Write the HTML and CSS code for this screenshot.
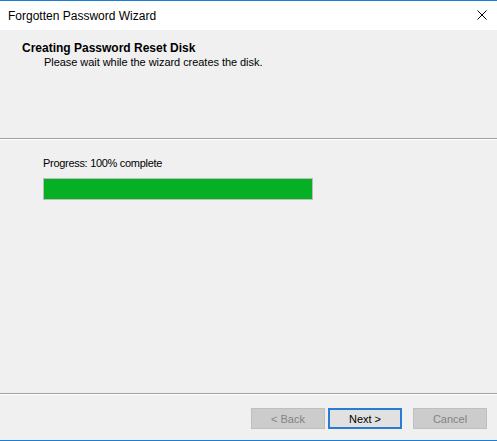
FILE: index.html
```html
<!DOCTYPE html>
<html lang="en">
<head>
    <meta charset="UTF-8">
    <title>Forgotten Password Wizard</title>
    <link rel="stylesheet" href="styles.css">
</head>
<body>
    <div class="window">
        <div class="titlebar">
            <span class="title">Forgotten Password Wizard</span>
            <svg class="close" width="10" height="10" viewBox="0 0 10 10">
                <path d="M0.5 0.5 L9.5 9.5 M9.5 0.5 L0.5 9.5" stroke="#000" stroke-width="1" fill="none"/>
            </svg>
        </div>
        <div class="header">
            <div class="heading">Creating Password Reset Disk</div>
            <div class="subheading">Please wait while the wizard creates the disk.</div>
        </div>
        <div class="separator"></div>
        <div class="content">
            <div class="progress-label">Progress: 100% complete</div>
            <div class="progress">
                <div class="progress-fill" style="width: 100%"></div>
            </div>
        </div>
        <div class="separator"></div>
        <div class="footer">
            <button class="btn btn-back" disabled>&lt; Back</button>
            <button class="btn btn-next">Next &gt;</button>
            <button class="btn btn-cancel" disabled>Cancel</button>
        </div>
    </div>
</body>
</html>
```

FILE: styles.css
```css
html, body {
    margin: 0;
    padding: 0;
}
body {
    font-family: "Liberation Sans", Arial, sans-serif;
    font-size: 11px;
    color: #000;
    background: #f0f0f0;
}
.window {
    width: 497px;
    height: 441px;
    box-sizing: border-box;
    border-top: 1px solid #1a7fd4;
    border-bottom: 1px solid #1a7fd4;
    display: flex;
    flex-direction: column;
    background: #f0f0f0;
}
.titlebar {
    height: 29px;
    background: #fff;
    display: flex;
    align-items: center;
    justify-content: space-between;
    padding: 0 10px 0 8px;
}
.title {
    font-family: "Liberation Sans", Arial, sans-serif;
    font-size: 12px;
    line-height: 16px;
    margin-top: 1px;
}
.close {
    display: block;
    margin-top: -1px;
}
.header {
    height: 108px;
    box-sizing: border-box;
    padding-top: 11px;
}
.heading {
    font-weight: bold;
    font-size: 12px;
    padding-left: 22px;
    line-height: 14px;
}
.subheading {
    padding-left: 44px;
    margin-top: 1px;
    line-height: 13px;
    letter-spacing: -0.05px;
}
.separator {
    height: 1px;
    background: #a0a0a0;
    border-bottom: 1px solid #fff;
}
.content {
    flex: 1;
    padding: 17px 0 0 43px;
}
.progress-label {
    line-height: 13px;
    letter-spacing: -0.3px;
}
.progress {
    margin-top: 8px;
    width: 270px;
    height: 22px;
    box-sizing: border-box;
    border: 1px solid #bcbcbc;
    background: #e6e6e6;
}
.progress-fill {
    height: 100%;
    background: #06b025;
}
.footer {
    height: 45px;
    box-sizing: border-box;
    padding: 13px 10px 0 0;
    display: flex;
    justify-content: flex-end;
    align-items: flex-start;
}
.btn {
    width: 74px;
    height: 21px;
    box-sizing: border-box;
    font-family: "Liberation Sans", Arial, sans-serif;
    font-size: 11px;
    padding: 0;
    border: 1px solid #adadad;
    background: #e1e1e1;
    color: #000;
}
.btn[disabled] {
    background: #cccccc;
    border-color: #bfbfbf;
    color: #838383;
}
.btn-back {
    margin-right: 3px;
}
.btn-next {
    margin-right: 11px;
    border: 2px solid #2b7bd2;
}
```
